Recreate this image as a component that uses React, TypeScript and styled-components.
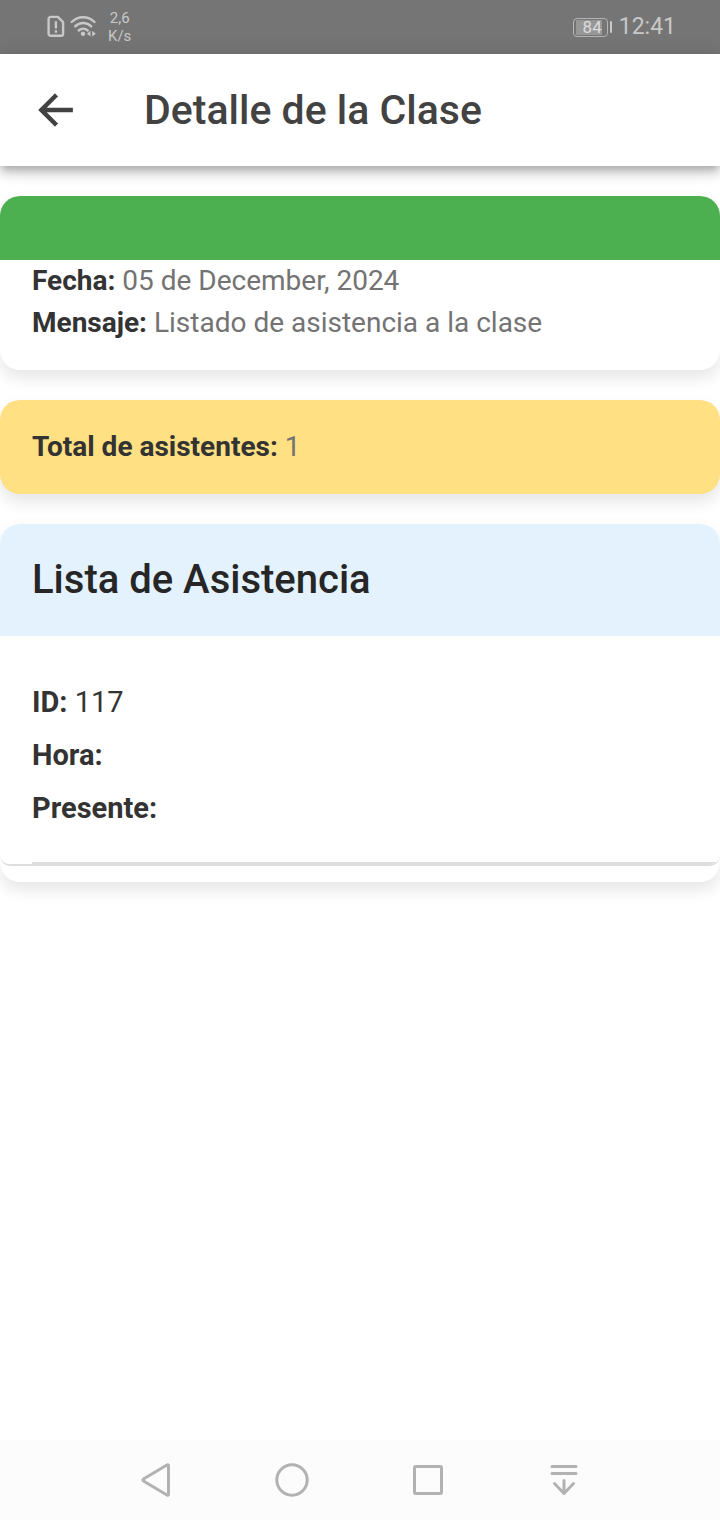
import React from "react";
import styled, { createGlobalStyle } from "styled-components";

const GlobalStyle = createGlobalStyle`
  *, *::before, *::after { box-sizing: border-box; }
  body { margin: 0; background: #fff; font-family: Roboto, "Liberation Sans", sans-serif; }
  h1, h2, p { margin: 0; }
`;

const Screen = styled.div`
  display: flex;
  flex-direction: column;
  min-height: 100vh;
  background: #fff;
`;

const StatusBar = styled.div`
  display: flex;
  align-items: center;
  justify-content: space-between;
  height: 54px;
  padding: 0 44px 0 46px;
  background: #757575;
  color: #c8c8c8;
`;

const StatusGroup = styled.div<{ $gap: number }>`
  display: flex;
  align-items: center;
  gap: ${(p) => p.$gap}px;
`;

const NetworkSpeed = styled.div`
  display: flex;
  flex-direction: column;
  align-items: center;
  margin-left: 6px;
  font-size: 15px;
  line-height: 18px;
`;

const Battery = styled.div`
  display: flex;
  align-items: center;
  gap: 2px;
  &::after {
    content: "";
    width: 2px;
    height: 12px;
    border-radius: 1px;
    background: #c8c8c8;
  }
`;

const BatteryBody = styled.div`
  width: 35px;
  height: 19px;
  padding: 1px 2px;
  border: 1px solid #b4b4b4;
  border-radius: 4px;
`;

const BatteryLevel = styled.div`
  width: 26px;
  background: #979797;
  color: #dcdcdc;
  font-size: 17px;
  line-height: 15px;
  text-align: right;
`;

const Clock = styled.time`
  font-size: 23px;
  line-height: 28px;
`;

const Toolbar = styled.header`
  display: flex;
  align-items: center;
  gap: 48px;
  height: 112px;
  padding: 0 16px;
  background: #fff;
  box-shadow: 0 4px 8px -2px rgba(0, 0, 0, 0.2), 0 8px 10px rgba(0, 0, 0, 0.14),
    0 2px 20px rgba(0, 0, 0, 0.12);
  color: #424242;
`;

const BackButton = styled.button`
  display: flex;
  align-items: center;
  justify-content: center;
  width: 80px;
  height: 80px;
  padding: 0;
  border: 0;
  background: none;
  color: inherit;
`;

const Title = styled.h1`
  font-size: 41px;
  font-weight: 500;
  line-height: 48px;
`;

const Content = styled.main`
  display: flex;
  flex: 1;
  flex-direction: column;
  gap: 30px;
  padding: 30px 0;
`;

const Card = styled.section<{ $tone?: string }>`
  overflow: hidden;
  border-radius: 20px;
  background: ${(p) => p.$tone ?? "#fff"};
  box-shadow: 0 8px 16px rgba(0, 0, 0, 0.1);
`;

const CardBanner = styled.div`
  height: 64px;
  background: #4caf50;
`;

const CardBody = styled.div<{ $top: number; $bottom: number }>`
  padding: ${(p) => p.$top}px 32px ${(p) => p.$bottom}px;
`;

const Line = styled.p`
  color: #737373;
  font-size: 28px;
  line-height: 42px;
`;

const Label = styled.strong`
  color: #333;
  font-weight: 700;
`;

const ListHeader = styled.div`
  padding: 32px;
  background: #e3f2fd;
`;

const ListTitle = styled.h2`
  color: #262626;
  font-size: 40px;
  font-weight: 500;
  line-height: 48px;
`;

const ItemList = styled.div`
  padding-bottom: 16px;
`;

const Item = styled.article`
  overflow: hidden;
  padding-left: 32px;
  border-bottom: 2px solid #dedede;
  border-radius: 10px;
`;

const ItemInner = styled.div`
  display: flex;
  flex-direction: column;
  gap: 11px;
  padding: 45px 0 33px;
  border-bottom: 2px solid #dedede;
`;

const ItemLine = styled.p`
  color: #333;
  font-size: 29px;
  line-height: 42px;
`;

const NavBar = styled.nav`
  display: flex;
  justify-content: center;
  gap: 56px;
  height: 80px;
  background: #fcfcfc;
`;

const NavButton = styled.button`
  display: flex;
  align-items: center;
  justify-content: center;
  width: 80px;
  padding: 0;
  border: 0;
  background: none;
  color: #b2b2b2;
`;

const NavIcon = ({ children }: { children: React.ReactNode }) => (
  <svg width="40" height="40" viewBox="0 0 40 40" fill="none" stroke="currentColor" strokeWidth="3" strokeLinecap="round" strokeLinejoin="round" aria-hidden="true">
    {children}
  </svg>
);

const SimAlertIcon = () => (
  <svg width="20" height="24" viewBox="0 0 20 24" fill="none" stroke="currentColor" strokeWidth="2.4" aria-hidden="true">
    <path d="M4.600 1.900h7.200l5.300 5.300v11.600a2 2 0 0 1-2 2H4.600a2 2 0 0 1-2-2V3.900a2 2 0 0 1 2-2z" strokeLinejoin="round" />
    <path d="M9.900 6.200v7.200M9.900 15.200v2.600" />
  </svg>
);

const WifiIcon = () => (
  <svg width="28" height="24" viewBox="0 0 28 24" fill="none" stroke="currentColor" strokeWidth="2.400" strokeLinecap="round" aria-hidden="true">
    <path d="M1.700 7C8.200.600 18.200.600 24.500 7M5.200 11.300c4.600-4.400 11.400-4.400 16 0M8.700 15.500c2.600-2.400 6.400-2.400 9 0" />
    <circle cx="13" cy="18.800" r="2.200" fill="currentColor" stroke="none" />
    <path d="M20.500 15.800v5.800L16.900 18.700zM22.200 15.800v5.800l3.600-2.900z" fill="currentColor" stroke="none" />
  </svg>
);

const ArrowBackIcon = () => (
  <svg width="48" height="48" viewBox="0 0 512 512" fill="none" stroke="currentColor" strokeWidth="48" strokeLinecap="square" strokeMiterlimit="10" aria-hidden="true">
    <path d="M244 400 100 256l144-144M120 256h292" />
  </svg>
);

export default function App() {
  return (
    <>
      <GlobalStyle />
      <Screen>
        <StatusBar>
          <StatusGroup $gap={4}>
            <SimAlertIcon />
            <WifiIcon />
            <NetworkSpeed>
              <span>2,6</span>
              <span>K/s</span>
            </NetworkSpeed>
          </StatusGroup>
          <StatusGroup $gap={7}>
            <Battery>
              <BatteryBody>
                <BatteryLevel>84</BatteryLevel>
              </BatteryBody>
            </Battery>
            <Clock>12:41</Clock>
          </StatusGroup>
        </StatusBar>

        <Toolbar>
          <BackButton type="button" aria-label="Volver">
            <ArrowBackIcon />
          </BackButton>
          <Title>Detalle de la Clase</Title>
        </Toolbar>

        <Content>
          <Card>
            <CardBanner />
            <CardBody $top={0} $bottom={26}>
              <Line><Label>Fecha:</Label> 05 de December, 2024</Line>
              <Line><Label>Mensaje:</Label> Listado de asistencia a la clase</Line>
            </CardBody>
          </Card>

          <Card $tone="#ffe082">
            <CardBody $top={26} $bottom={26}>
              <Line><Label>Total de asistentes:</Label> 1</Line>
            </CardBody>
          </Card>

          <Card>
            <ListHeader>
              <ListTitle>Lista de Asistencia</ListTitle>
            </ListHeader>
            <ItemList>
              <Item>
                <ItemInner>
                  <ItemLine><Label>ID:</Label> 117</ItemLine>
                  <ItemLine><Label>Hora:</Label></ItemLine>
                  <ItemLine><Label>Presente:</Label></ItemLine>
                </ItemInner>
              </Item>
            </ItemList>
          </Card>
        </Content>

        <NavBar aria-label="Sistema">
          <NavButton type="button" aria-label="Atrás">
            <NavIcon><path d="M32.500 5.500v29a.8.8 0 0 1-1.200.700L7.500 21a1.100 1.100 0 0 1 0-2L31.300 4.800a.8.8 0 0 1 1.200.700z" /></NavIcon>
          </NavButton>
          <NavButton type="button" aria-label="Inicio">
            <NavIcon><circle cx="20" cy="20" r="15.200" /></NavIcon>
          </NavButton>
          <NavButton type="button" aria-label="Recientes">
            <NavIcon><rect x="6.500" y="6.500" width="27" height="27" rx="1.500" /></NavIcon>
          </NavButton>
          <NavButton type="button" aria-label="Ocultar barra">
            <NavIcon><path d="M8 6.500h24M8 13.500h24M20 20.500v13M10.500 23.500l9.500 10 9.500-10" /></NavIcon>
          </NavButton>
        </NavBar>
      </Screen>
    </>
  );
}
